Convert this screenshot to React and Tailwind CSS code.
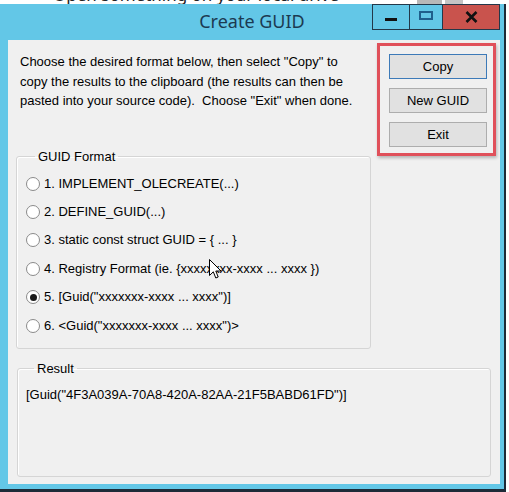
import React from "react";

const sans = { fontFamily: '"Liberation Sans", Arial, sans-serif' };

function Radio({ checked, label }) {
  return (
    <div className="flex h-[28.4px] items-center">
      <span className="flex h-[14px] w-[14px] items-center justify-center rounded-full border border-[#8a8a8a] bg-white">
        {checked && <span className="h-[7px] w-[7px] rounded-full bg-[#1a1a1a]" />}
      </span>
      <span className="ml-[4px] text-[13px] leading-[16px] text-black">{label}</span>
    </div>
  );
}

function Btn({ children, focused }) {
  return (
    <div
      className={
        "flex h-[25px] w-[98px] items-center justify-center border bg-[#e1e1e1] text-[13px] text-black " +
        (focused ? "border-[#3d7ab8]" : "border-[#adadad]")
      }
    >
      {children}
    </div>
  );
}

export default function App() {
  return (
    <div className="relative h-[492px] w-[509px] overflow-hidden bg-white" style={sans}>
      {/* background strip behind the window */}
      <div className="flex h-[4px] overflow-hidden">
        <div className="ml-[53px] mt-[-15px] text-[17px] leading-[20px] text-[#222]" style={{ fontFamily: '"Noto Sans", sans-serif' }}>
          Open something on your local drive
        </div>
        <div className="ml-auto h-[4px] w-[25px] bg-[#b8b8b8]" />
        <div className="ml-[3px] mr-[46px] h-[4px] w-[18px] bg-[#c4c4c4]" />
      </div>

      {/* window */}
      <div className="flex h-[488px] w-[506px] flex-col border-b-[3px] border-r-[2px] border-[#1d2b38] bg-[#63c7e7]">
        {/* title bar */}
        <div className="relative flex h-[36px] items-start">
          <div className="absolute left-0 right-0 top-[5px] text-center text-[18px] leading-[24px] text-[#1c3a52]" style={{ fontFamily: '"Noto Sans", sans-serif' }}>
            Create GUID
          </div>
          <div className="relative ml-auto mr-[4px] flex h-[26px]">
            <div className="flex h-[26px] w-[37px] items-center justify-center border border-r-0 border-[#23384a]">
              <div className="mt-[4px] h-[3px] w-[12px] bg-[#111]" />
            </div>
            <div className="flex h-[26px] w-[33px] items-center justify-center border border-r-0 border-[#23384a]">
              <div className="mb-[4px] h-[9px] w-[14px] border-[2.5px] border-[#1f5f8c]" />
            </div>
            <div className="flex h-[26px] w-[58px] items-center justify-center border border-[#23384a] bg-[#c9534d]">
              <svg width="13" height="12" viewBox="0 0 13 12">
                <path d="M1.5 1 L11.5 11 M11.5 1 L1.5 11" stroke="#111" strokeWidth="2.6" />
              </svg>
            </div>
          </div>
        </div>

        {/* client area */}
        <div className="ml-[8px] flex h-[444px] w-[492px] flex-col bg-[#f0f0f0] pl-[8px]">
          <div className="flex">
            {/* left column */}
            <div className="flex w-[355px] flex-col">
              <p className="ml-[4px] mt-[12px] text-[13px] leading-[19.5px] text-black">
                Choose the desired format below, then select "Copy" to
                <br />
                copy the results to the clipboard (the results can then be
                <br />
                pasted into your source code).&nbsp; Choose "Exit" when done.
              </p>
              <fieldset className="mt-[38px] h-[200px] rounded-[3px] border border-[#d5d5d5] pl-[9px] pt-[6px] shadow-[inset_1px_1px_0_#ffffff]">
                <legend className="ml-[9px] px-[3px] text-[13px] leading-[15px] text-black">GUID Format</legend>
                <Radio label="1. IMPLEMENT_OLECREATE(...)" />
                <Radio label="2. DEFINE_GUID(...)" />
                <Radio label="3. static const struct GUID = { ... }" />
                <Radio label="4. Registry Format (ie. {xxxxxxxx-xxxx ... xxxx })" />
                <Radio checked label={'5. [Guid("xxxxxxx-xxxx ... xxxx")]'} />
                <Radio label={'6. <Guid("xxxxxxx-xxxx ... xxxx")>'} />
              </fieldset>
            </div>
            {/* right column: buttons in red highlight */}
            <div className="ml-[6px] mt-[3px] flex h-[113px] w-[119px] flex-col gap-[9px] border-[3px] border-[#e0505a] pl-[9px] pt-[8px] shadow-[1px_2px_3px_rgba(0,0,0,0.25)]">
              <Btn focused>Copy</Btn>
              <Btn>New GUID</Btn>
              <Btn>Exit</Btn>
            </div>
          </div>

          <fieldset className="ml-[1px] mt-[12px] h-[116px] w-[474px] rounded-[3px] border border-[#d5d5d5] pl-[8px] pt-[9px] shadow-[inset_1px_1px_0_#ffffff]">
            <legend className="ml-[8px] px-[3px] text-[13px] leading-[15px] text-black">Result</legend>
            <div className="text-[13px] leading-[19px] text-black">[Guid("4F3A039A-70A8-420A-82AA-21F5BABD61FD")]</div>
          </fieldset>
        </div>
      </div>

      {/* mouse cursor */}
      <svg className="absolute left-[209px] top-[259px]" width="13" height="21" viewBox="0 0 13 21">
        <path d="M0.5 0.5 L0.5 16.5 L4.3 12.8 L6.8 19 L9.2 18 L6.8 12 L12 12 Z" fill="#fff" stroke="#000" strokeWidth="1" strokeLinejoin="round" />
      </svg>
    </div>
  );
}
